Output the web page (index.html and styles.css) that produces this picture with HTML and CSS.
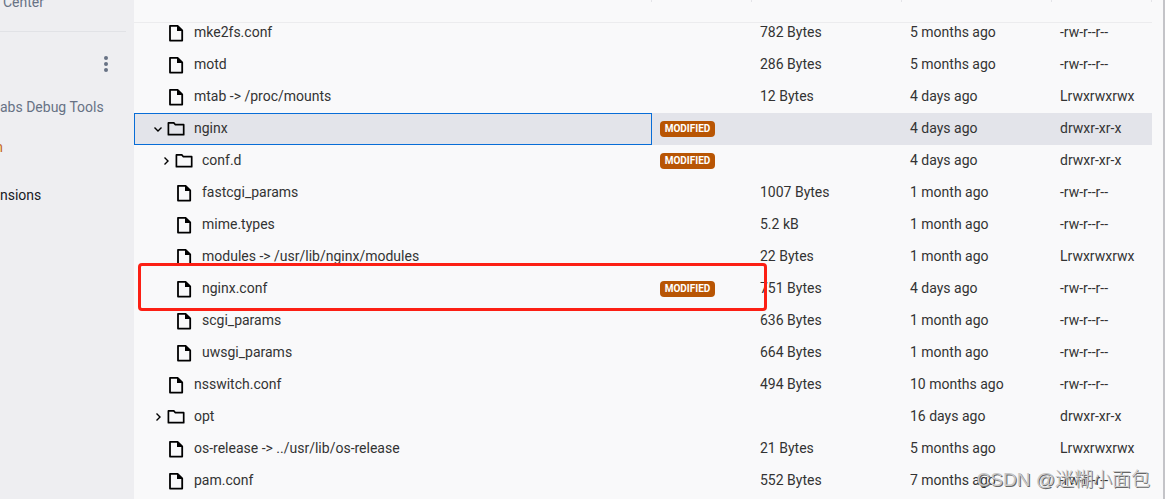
FILE: index.html
```
<!DOCTYPE html>
<html lang="en">
<head>
<meta charset="utf-8">
<title>Container files</title>
<link rel="stylesheet" href="styles.css">
</head>
<body>
<svg class="defs" aria-hidden="true">
  <symbol id="file" viewBox="0 0 20 20"><path d="M4 2.8h7.6L16.2 7.400v10.200H4z" fill="none" stroke="currentColor" stroke-width="1.8" stroke-linejoin="round"/><path d="M11 2v6h6z" fill="currentColor"/></symbol>
  <symbol id="folder" viewBox="0 0 20 20"><path d="M2.400 3.900h5.400l1.600 1.800h8.300v10H2.400z" fill="none" stroke="currentColor" stroke-width="1.7" stroke-linejoin="round"/></symbol>
  <symbol id="right" viewBox="0 0 16 16"><path d="M6.500 4.500L10 8l-3.500 3.500" fill="none" stroke="currentColor" stroke-width="1.400"/></symbol>
  <symbol id="down" viewBox="0 0 16 16"><path d="M4.500 6.500L8 10l3.500-3.500" fill="none" stroke="currentColor" stroke-width="1.400"/></symbol>
</svg>
<div class="app">
  <nav class="sidebar">
    <a class="link top" href="#">Center</a>
    <hr class="rule">
    <button class="more" type="button" aria-label="More"><svg width="20" height="20" viewBox="0 0 20 20" fill="currentColor"><circle cx="10" cy="4" r="2"/><circle cx="10" cy="10" r="2"/><circle cx="10" cy="16" r="2"/></svg></button>
    <a class="link debug" href="#">abs Debug Tools</a>
    <a class="link orange" href="#"><span>n</span></a>
    <a class="link dark" href="#">nsions</a>
  </nav>
  <main class="files">
    <table class="table">
      <colgroup><col><col class="c-note"><col class="c-size"><col class="c-date"><col class="c-mode"></colgroup>
      <thead><tr><th></th><th></th><th></th><th></th><th></th></tr></thead>
      <tbody>
        <tr class="first"><td><div class="name file"><svg><use href="#file"/></svg>mke2fs.conf</div></td><td></td><td>782 Bytes</td><td>5 months ago</td><td>-rw-r--r--</td></tr>
        <tr><td><div class="name file"><svg><use href="#file"/></svg>motd</div></td><td></td><td>286 Bytes</td><td>5 months ago</td><td>-rw-r--r--</td></tr>
        <tr><td><div class="name file"><svg><use href="#file"/></svg>mtab -&gt; /proc/mounts</div></td><td></td><td>12 Bytes</td><td>4 days ago</td><td>Lrwxrwxrwx</td></tr>
        <tr class="selected"><td><div class="name"><button class="toggle" type="button" aria-label="Collapse nginx"><svg><use href="#down"/></svg></button><svg><use href="#folder"/></svg>nginx</div></td><td><span class="badge">MODIFIED</span></td><td></td><td>4 days ago</td><td>drwxr-xr-x</td></tr>
        <tr class="nested"><td><div class="name"><button class="toggle" type="button" aria-label="Expand conf.d"><svg><use href="#right"/></svg></button><svg><use href="#folder"/></svg>conf.d</div></td><td><span class="badge">MODIFIED</span></td><td></td><td>4 days ago</td><td>drwxr-xr-x</td></tr>
        <tr class="nested"><td><div class="name file"><svg><use href="#file"/></svg>fastcgi_params</div></td><td></td><td>1007 Bytes</td><td>1 month ago</td><td>-rw-r--r--</td></tr>
        <tr class="nested"><td><div class="name file"><svg><use href="#file"/></svg>mime.types</div></td><td></td><td>5.2 kB</td><td>1 month ago</td><td>-rw-r--r--</td></tr>
        <tr class="nested"><td><div class="name file"><svg><use href="#file"/></svg>modules -&gt; /usr/lib/nginx/modules</div></td><td></td><td>22 Bytes</td><td>1 month ago</td><td>Lrwxrwxrwx</td></tr>
        <tr class="nested"><td><div class="name file"><svg><use href="#file"/></svg>nginx.conf</div></td><td><span class="badge">MODIFIED</span></td><td>751 Bytes</td><td>4 days ago</td><td>-rw-r--r--</td></tr>
        <tr class="nested"><td><div class="name file"><svg><use href="#file"/></svg>scgi_params</div></td><td></td><td>636 Bytes</td><td>1 month ago</td><td>-rw-r--r--</td></tr>
        <tr class="nested"><td><div class="name file"><svg><use href="#file"/></svg>uwsgi_params</div></td><td></td><td>664 Bytes</td><td>1 month ago</td><td>-rw-r--r--</td></tr>
        <tr><td><div class="name file"><svg><use href="#file"/></svg>nsswitch.conf</div></td><td></td><td>494 Bytes</td><td>10 months ago</td><td>-rw-r--r--</td></tr>
        <tr><td><div class="name"><button class="toggle" type="button" aria-label="Expand opt"><svg><use href="#right"/></svg></button><svg><use href="#folder"/></svg>opt</div></td><td></td><td></td><td>16 days ago</td><td>drwxr-xr-x</td></tr>
        <tr><td><div class="name file"><svg><use href="#file"/></svg>os-release -&gt; ../usr/lib/os-release</div></td><td></td><td>21 Bytes</td><td>5 months ago</td><td>Lrwxrwxrwx</td></tr>
        <tr><td><div class="name file"><svg><use href="#file"/></svg>pam.conf</div></td><td></td><td>552 Bytes</td><td>7 months ago</td><td>-rw-r--r--</td></tr>
      </tbody>
    </table>
    <div class="marker"></div>
  </main>
  <div class="watermark">CSDN @迷糊小面包</div>
</div>
</body>
</html>
```
FILE: styles.css
```
* { box-sizing: border-box; }
body {
  margin: 0;
  background: #f9f9fa;
  color: #333;
  font: 14px/20px Roboto, "Noto Sans CJK SC", sans-serif;
}
.defs { position: absolute; width: 0; height: 0; }
button { border: 0; padding: 0; background: none; color: inherit; display: flex; }
.app { position: relative; display: flex; height: 100vh; overflow: hidden; }

.sidebar {
  width: 134px;
  flex: none;
  display: flex;
  flex-direction: column;
  background: #eeeef1;
}
.link { color: #677285; text-decoration: none; white-space: nowrap; }
.top { margin: -8px 0 0 3px; }
.rule { width: 126px; margin: 19px 0 0; border: 0; border-top: 1px solid #e1e2e6; }
.more { align-self: flex-end; margin: 22px 18px 0 0; color: #677285; }
.debug { margin-top: 23px; }
.orange { margin-top: 20px; color: #c66a1b; width: 3px; overflow: hidden; display: flex; justify-content: flex-end; }
.dark { margin-top: 28px; color: #17191e; }

.files { position: relative; flex: 1; min-width: 0; padding-right: 11px; border-right: 2px solid #c4c4c8; }
.table { width: 100%; table-layout: fixed; border-collapse: separate; border-spacing: 0; }
.c-note { width: 100px; }
.c-size, .c-date { width: 150px; }
.c-mode { width: 100px; }
th { height: 23px; padding: 0; border-bottom: 1px solid #ececee; background: linear-gradient(#e4e4e8, #e4e4e8) right top / 1px 2px no-repeat; }
td { height: 32px; padding: 0 0 2px 8px; white-space: nowrap; }
td:first-child { padding-left: 16px; }
.first td { height: 26px; padding-bottom: 8px; line-height: 18px; }
.first .name { height: 18px; }
.nested td:first-child { padding-left: 24px; }
.selected { background: #e3e4ea; }
.selected td:first-child { padding-left: 15px; border: 1px solid #086dd7; }
.name { display: flex; align-items: center; }
.name svg { width: 20px; height: 20px; margin: 2px 8px 0 0; color: #000; }
.name .toggle svg { width: 16px; height: 16px; margin: 2px 0 0; }
.file { padding-left: 16px; }
.badge {
  display: block;
  width: max-content;
  min-width: 55px;
  margin-top: 2px;
  padding: 0 4px;
  border-radius: 4px;
  background: #b85504;
  color: #fff;
  font-size: 10px;
  font-weight: 700;
  line-height: 16px;
  text-align: center;
}
.marker {
  position: absolute;
  left: 4px;
  right: 396px;
  top: 263px;
  height: 48px;
  border: 3px solid #fc1f14;
  border-radius: 4px;
}
.watermark {
  position: absolute;
  right: 15px;
  bottom: 5px;
  color: #c8c8c8;
  font: 300 19px/28px "Liberation Sans", "Noto Sans CJK SC", sans-serif;
  text-shadow: 1px 1px 0 #666;
  white-space: nowrap;
}
```
